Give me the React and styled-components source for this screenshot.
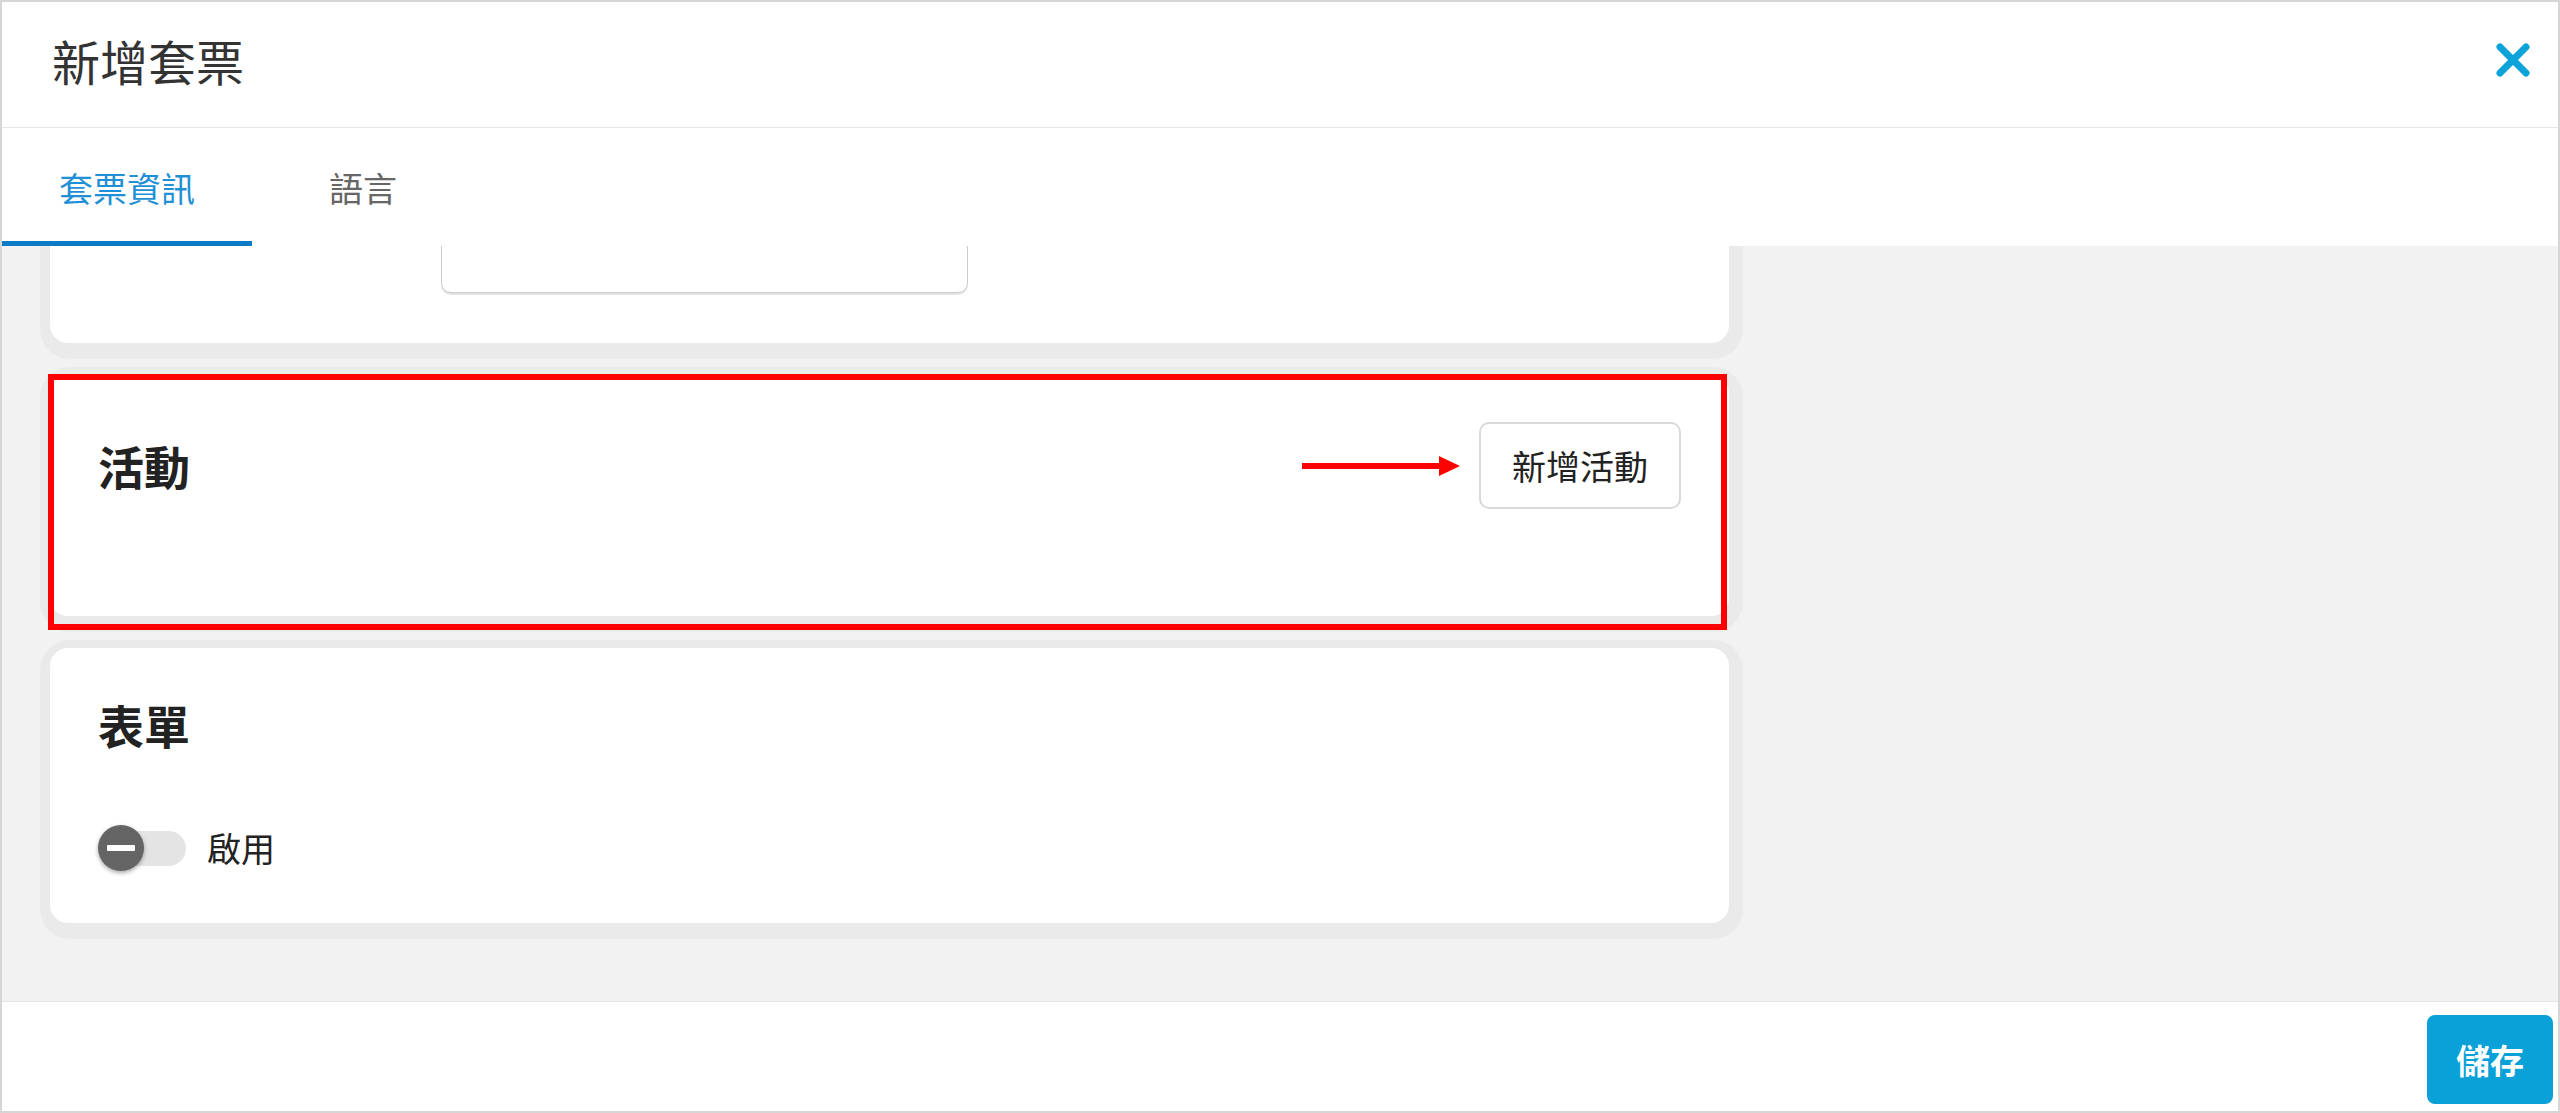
import React from "react";
import styled, { createGlobalStyle } from "styled-components";

const Global = createGlobalStyle`
  html, body { margin: 0; padding: 0; background: #fff; }
  body { font-family: "Noto Sans CJK TC", "Noto Sans", sans-serif; }
  *, *::before, *::after { box-sizing: border-box; }
`;

const Frame = styled.div`
  width: 2560px;
  height: 1113px;
  border: 2px solid #d6d6d6;
  display: flex;
  flex-direction: column;
  background: #fff;
  overflow: hidden;
`;

const Header = styled.header`
  flex: none;
  height: 126px;
  display: flex;
  align-items: center;
  justify-content: space-between;
  padding: 0 28px 10px 50px;
  border-bottom: 1px solid #e6e6e6;
`;

const Title = styled.h1`
  margin: 0;
  font-size: 48px;
  font-weight: 400;
  line-height: 1.5;
  color: #333;
`;

const CloseButton = styled.button`
  width: 34px;
  height: 34px;
  padding: 0;
  border: none;
  background: none;
  display: flex;
  cursor: pointer;
`;

const TabBar = styled.nav`
  flex: none;
  height: 118px;
  display: flex;
  gap: 20px;
  background: #fff;
`;

const Tab = styled.div`
  display: flex;
  align-items: center;
  padding: 5px 57px 0;
  font-size: 34px;
  color: ${(p) => (p.$active ? "#1f8fd6" : "#666")};
  border-bottom: 5px solid ${(p) => (p.$active ? "#0b7bc6" : "transparent")};
`;

const Body = styled.main`
  flex: 1;
  min-height: 0;
  background: #f2f2f2;
  display: flex;
  flex-direction: column;
  justify-content: flex-end;
  overflow: hidden;
  padding: 0 0 78px 48px;
`;

const Column = styled.div`
  flex: none;
  width: 1679px;
  display: flex;
  flex-direction: column;
  gap: 32px;
`;

const Card = styled.section`
  position: relative;
  background: #fff;
  border-radius: 18px;
  box-shadow: 2px 4px 1px 12px #eaeaea;
  padding: ${(p) => p.$padTop || 45}px 48px 50px;
`;

const FieldRow = styled.div`
  display: grid;
  grid-template-columns: 343px 527px;
  align-items: start;
`;

const FieldLabelCell = styled.div`
  min-height: 1px;
`;

const TextBox = styled.div`
  height: 170px;
  border: 1px solid #cccccc;
  border-radius: 10px;
  box-shadow: 0 2px 0 #e3e3e3;
`;

const CardHead = styled.div`
  display: flex;
  align-items: center;
  justify-content: space-between;
`;

const CardTitle = styled.h2`
  margin: 0;
  font-size: 46px;
  font-weight: 700;
  line-height: 1.5;
  color: #222;
`;

const Actions = styled.div`
  display: flex;
  align-items: center;
  gap: 19px;
`;

const OutlineButton = styled.button`
  height: 87px;
  padding: 0 31px;
  border: 2px solid #d9d9d9;
  border-radius: 10px;
  background: #fff;
  font-family: inherit;
  font-size: 34px;
  color: #222;
  cursor: pointer;
`;

const EmptyList = styled.div`
  min-height: 57px;
`;

const Highlight = styled.div`
  position: absolute;
  top: -1px;
  left: -2px;
  right: 2px;
  bottom: -14px;
  border: 6px solid #ff0000;
  pointer-events: none;
`;

const ToggleRow = styled.div`
  margin-top: 63px;
  display: flex;
  align-items: center;
  gap: 21px;
`;

const Switch = styled.div`
  position: relative;
  width: 88px;
  height: 48px;
  flex: none;
`;

const Track = styled.div`
  position: absolute;
  left: 12px;
  right: 0;
  top: 7px;
  height: 35px;
  border-radius: 18px;
  background: #e4e4e4;
`;

const Knob = styled.div`
  position: absolute;
  left: 0;
  top: 1px;
  width: 46px;
  height: 46px;
  border-radius: 50%;
  background: #646464;
  box-shadow: 0 2px 4px rgba(0, 0, 0, 0.35);
  display: flex;
  align-items: center;
  justify-content: center;

  &::after {
    content: "";
    width: 28px;
    height: 6px;
    border-radius: 1px;
    background: #fff;
  }
`;

const ToggleLabel = styled.span`
  font-size: 34px;
  color: #222;
  line-height: 1.5;
`;

const Footer = styled.footer`
  flex: none;
  height: 110px;
  border-top: 1px solid #e4e4e4;
  display: flex;
  align-items: center;
  justify-content: flex-end;
  padding: 6px 5px 0 0;
`;

const PrimaryButton = styled.button`
  width: 126px;
  height: 89px;
  border: none;
  border-radius: 8px;
  background: #0aa0d8;
  color: #fff;
  font-family: inherit;
  font-size: 34px;
  font-weight: 700;
  cursor: pointer;
`;

const CloseIcon = () => (
  <svg width="34" height="34" viewBox="0 0 34 34">
    <path
      d="M4 4 L30 30 M30 4 L4 30"
      stroke="#0ba3da"
      strokeWidth="7"
      strokeLinecap="round"
      fill="none"
    />
  </svg>
);

const Arrow = () => (
  <svg width="158" height="20" viewBox="0 0 158 20">
    <rect x="0" y="7" width="140" height="6" fill="#ff0000" />
    <polygon points="137,0 158,10 137,20" fill="#ff0000" />
  </svg>
);

export default function App() {
  return (
    <>
      <Global />
      <Frame>
        <Header>
          <Title>新增套票</Title>
          <CloseButton aria-label="close">
            <CloseIcon />
          </CloseButton>
        </Header>
        <TabBar>
          <Tab $active>套票資訊</Tab>
          <Tab>語言</Tab>
        </TabBar>
        <Body>
          <Column>
            <Card>
              <FieldRow>
                <FieldLabelCell />
                <TextBox />
              </FieldRow>
            </Card>
            <Card $padTop={47}>
              <CardHead>
                <CardTitle>活動</CardTitle>
                <Actions>
                  <Arrow />
                  <OutlineButton>新增活動</OutlineButton>
                </Actions>
              </CardHead>
              <EmptyList />
              <Highlight />
            </Card>
            <Card $padTop={42}>
              <CardTitle>表單</CardTitle>
              <ToggleRow>
                <Switch>
                  <Track />
                  <Knob />
                </Switch>
                <ToggleLabel>啟用</ToggleLabel>
              </ToggleRow>
            </Card>
          </Column>
        </Body>
        <Footer>
          <PrimaryButton>儲存</PrimaryButton>
        </Footer>
      </Frame>
    </>
  );
}
